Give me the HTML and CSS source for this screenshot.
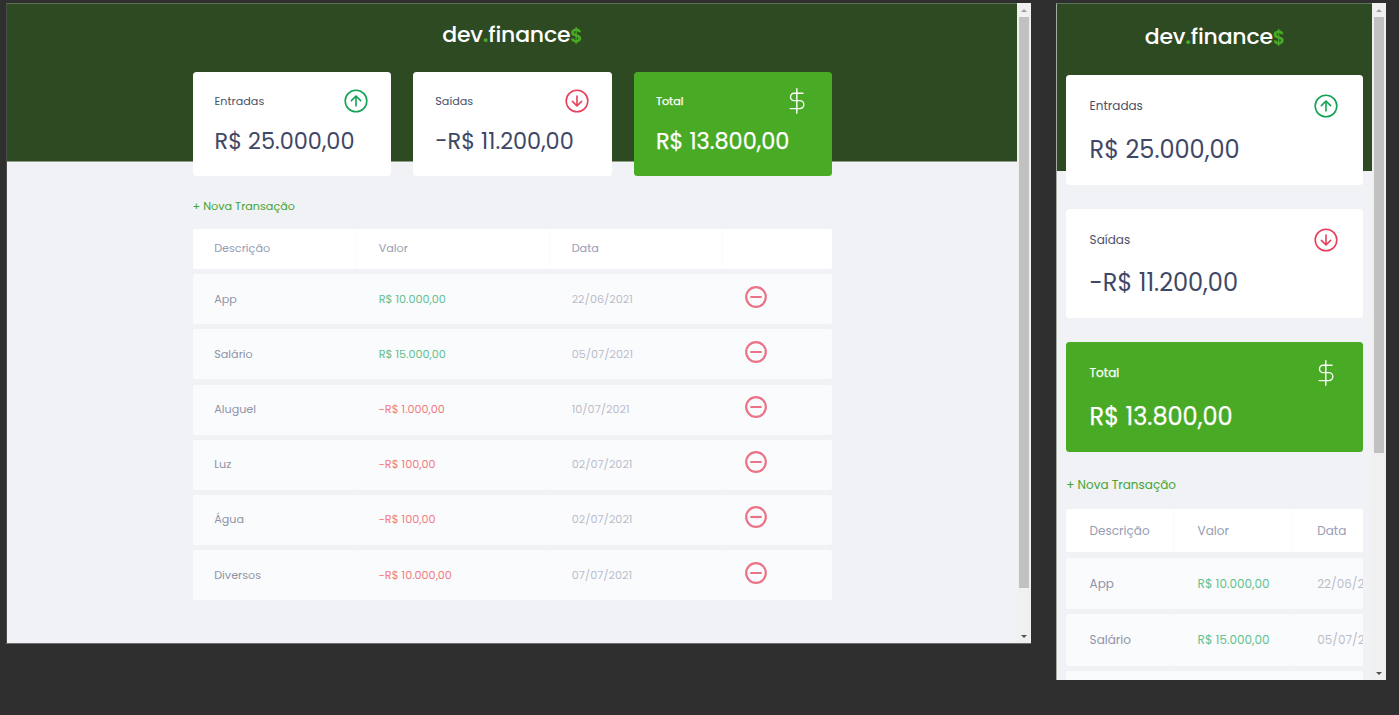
FILE: index.html
```html
<!DOCTYPE html>
<html lang="pt-BR">
<head>
<meta charset="utf-8">
<title>dev.finance$</title>
<link rel="stylesheet" href="styles.css">
</head>
<body>
<svg class="defs" width="0" height="0">
  <symbol id="up" viewBox="0 0 24 24"><circle cx="12" cy="12" r="10.8"/><path d="M12 17V7.2M7.4 11.6 12 7l4.6 4.6"/></symbol>
  <symbol id="down" viewBox="0 0 24 24"><circle cx="12" cy="12" r="10.8"/><path d="M12 7v9.8M7.4 12.400 12 17l4.600-4.600"/></symbol>
  <symbol id="dollar" viewBox="0 0 16 26"><path d="M7.800.8v24.400M14 5.200H5.200a3.700 3.700 0 0 0 0 7.400h5.600a4 4 0 0 1 0 8H1.200"/></symbol>
  <symbol id="minus" viewBox="0 0 22 22"><circle cx="11" cy="11" r="9.800"/><path d="M5.300 11h11.400"/></symbol>
</svg>

<main class="board">
  <section class="window desktop">
    <div class="page">
      <header class="header"><h1 class="logo">dev<b>.</b>finance<strong>$</strong></h1></header>
      <div class="container">
        <div class="cards">
          <article class="card"><h3><span>Entradas</span><svg class="icon green"><use href="#up"/></svg></h3><p>R$ 25.000,00</p></article>
          <article class="card"><h3><span>Saídas</span><svg class="icon red"><use href="#down"/></svg></h3><p>-R$ 11.200,00</p></article>
          <article class="card total"><h3><span>Total</span><svg class="icon dollar"><use href="#dollar"/></svg></h3><p>R$ 13.800,00</p></article>
        </div>
        <a class="new">+ Nova Transação</a>
        <div class="table">
          <div class="row head"><span>Descrição</span><span>Valor</span><span>Data</span><span></span></div>
          <div class="row"><span>App</span><span class="income">R$ 10.000,00</span><span class="date">22/06/2021</span><span><svg class="remove"><use href="#minus"/></svg></span></div>
          <div class="row"><span>Salário</span><span class="income">R$ 15.000,00</span><span class="date">05/07/2021</span><span><svg class="remove"><use href="#minus"/></svg></span></div>
          <div class="row"><span>Aluguel</span><span class="expense">-R$ 1.000,00</span><span class="date">10/07/2021</span><span><svg class="remove"><use href="#minus"/></svg></span></div>
          <div class="row"><span>Luz</span><span class="expense">-R$ 100,00</span><span class="date">02/07/2021</span><span><svg class="remove"><use href="#minus"/></svg></span></div>
          <div class="row"><span>Água</span><span class="expense">-R$ 100,00</span><span class="date">02/07/2021</span><span><svg class="remove"><use href="#minus"/></svg></span></div>
          <div class="row"><span>Diversos</span><span class="expense">-R$ 10.000,00</span><span class="date">07/07/2021</span><span><svg class="remove"><use href="#minus"/></svg></span></div>
        </div>
      </div>
    </div>
    <div class="scrollbar"><i class="arrow-up"></i><i class="thumb"></i><i class="arrow-down"></i></div>
  </section>

  <section class="window mobile">
    <div class="page">
      <header class="header"><h1 class="logo">dev<b>.</b>finance<strong>$</strong></h1></header>
      <div class="container">
        <div class="cards">
          <article class="card"><h3><span>Entradas</span><svg class="icon green"><use href="#up"/></svg></h3><p>R$ 25.000,00</p></article>
          <article class="card"><h3><span>Saídas</span><svg class="icon red"><use href="#down"/></svg></h3><p>-R$ 11.200,00</p></article>
          <article class="card total"><h3><span>Total</span><svg class="icon dollar"><use href="#dollar"/></svg></h3><p>R$ 13.800,00</p></article>
        </div>
        <a class="new">+ Nova Transação</a>
        <div class="table">
          <div class="row head"><span>Descrição</span><span>Valor</span><span>Data</span></div>
          <div class="row"><span>App</span><span class="income">R$ 10.000,00</span><span class="date">22/06/2021</span></div>
          <div class="row"><span>Salário</span><span class="income">R$ 15.000,00</span><span class="date">05/07/2021</span></div>
          <div class="row"><span></span><span></span><span></span></div>
        </div>
      </div>
    </div>
    <div class="scrollbar"><i class="arrow-up"></i><i class="thumb"></i><i class="arrow-down"></i></div>
  </section>
</main>
</body>
</html>
```
FILE: styles.css
```css
* { box-sizing: border-box; margin: 0; padding: 0; }

body {
  height: 715px;
  overflow: hidden;
  background: #2f2f2f;
  font-family: Poppins, Inter, "Open Sans", sans-serif;
  font-weight: 400;
}

.defs { display: block; }
svg { fill: none; stroke-linecap: round; stroke-linejoin: round; flex: none; }

.board { display: flex; align-items: flex-start; gap: 25px; padding: 3px 0 0 6px; }

.window { display: flex; overflow: hidden; background: #f0f2f5; }
.desktop { width: 1025px; height: 641px; border-bottom: 1px solid #6d6e6f; }
.mobile { width: 330px; height: 677px; }

.page {
  flex: 1;
  min-width: 0;
  overflow: hidden;
  border-left: 1px solid #4a4c48;
  border-top: 1px solid #5e7355;
}
.mobile .page { border-left-color: #a5aaa3; }

/* Header */
.header { height: 158px; background: #2d4a22; border-bottom: 1px solid #8f9f8a; text-align: center; padding: 17px 0 0 1px; }
.mobile .header { height: 167px; padding-top: 19px; border-bottom: 0; }
.logo { color: #fff; font-size: 22px; font-weight: 500; line-height: 28px; letter-spacing: -.2px; }
.logo b { color: #49aa26; font-weight: 600; }
.logo strong { color: #49aa26; font-size: 19px; font-weight: 600; letter-spacing: 0; }

.container { width: 639.6px; margin: -90px 0 0 185.6px; }
.mobile .container { width: 297px; margin: -96px 0 0 8.6px; }

/* Balance cards */
.cards { display: grid; grid-template-columns: repeat(3, 1fr); gap: 22.4px; }
.card { height: 104px; padding: 16.6px 22px 0; background: #fff; border-radius: 3.5px; color: #3f4766; }
.card h3 {
  display: flex;
  align-items: center;
  justify-content: space-between;
  height: 25px;
  color: #4a5068;
  font-size: 11.2px;
  font-weight: 400;
}
.card p { margin-top: 11.4px; font-size: 22.4px; line-height: 32px; white-space: nowrap; }
.card.total { background: #49aa26; color: #fff; -webkit-text-stroke: .25px #fff; }
.card.total h3 { color: #fff; }
.icon { width: 24px; height: 24px; stroke-width: 1.6; margin-right: 1px; }
.green { stroke: #12a454; }
.red { stroke: #e83f5b; }
.dollar { stroke: #fff; stroke-width: 1.4; width: 16px; height: 26px; margin-right: 5px; }

.mobile .cards { grid-template-columns: 1fr; gap: 24px; }
.mobile .card { height: 109.6px; padding: 18px 23.6px 0 24px; }
.mobile .card h3 { font-size: 12px; height: 26px; }
.mobile .card p { margin-top: 13.8px; font-size: 24px; line-height: 34px; }

/* Transactions */
.new { display: block; margin: 20.7px 0 14.3px; color: #45a436; font-size: 11.2px; line-height: 18px; }
.mobile .new { margin: 23.5px 0 14.1px .6px; font-size: 12px; line-height: 20px; }

.table { display: grid; gap: 5.2px; overflow: hidden; color: #8f93a8; font-size: 11.2px; }
.row {
  display: grid;
  grid-template-columns: 164.5px 193px 173px 1fr;
  height: 50px;
  overflow: hidden;
  background: #fafbfd;
  border-radius: 2px;
}
.row.head { height: 40px; background: #fff; color: #969cb3; }
.row span {
  display: flex;
  align-items: center;
  padding-left: 21.6px;
  border-right: 1px solid #f8f9fb;
  white-space: nowrap;
}
.row.head span { border-color: #fbfbfc; }
.row span:last-child { border-right: 0; }
.row .income { color: #62c18e; }
.row .expense { color: #f07c7f; }
.row .date { color: #bbbdcb; }
.remove { width: 22px; height: 22px; margin-bottom: 5px; stroke: #eb7387; stroke-width: 2.2; stroke-linecap: butt; }

.mobile .table { font-size: 12px; gap: 5.6px; }
.mobile .row { grid-template-columns: 108px 119.6px 130px; width: 358px; height: 51.2px; }
.mobile .row.head { height: 42.6px; }
.mobile .row span { padding-left: 24px; padding-top: 1px; }
.mobile .row.head span { padding-top: 0; }

/* Scrollbars */
.scrollbar {
  width: 14px;
  display: flex;
  flex-direction: column;
  align-items: center;
  background: #f0f0f0;
  padding: 6px 0 5px;
}
.arrow-up, .arrow-down { border: 3px solid transparent; border-top-width: 0; border-bottom: 3px solid #a0a0a0; }
.arrow-down { border-top: 3px solid #505050; border-bottom-width: 0; margin-top: auto; }
.thumb { width: 10px; height: 571px; margin-top: 5px; background: #c1c1c1; }
.mobile .thumb { height: 436px; }
```
